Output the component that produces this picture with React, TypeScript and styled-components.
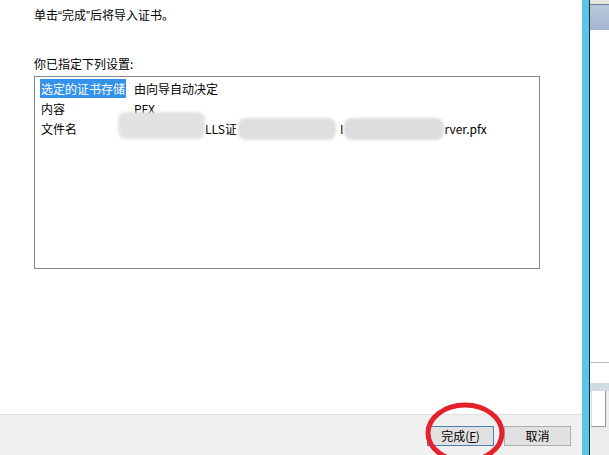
import React from "react";
import styled, { createGlobalStyle } from "styled-components";

const Global = createGlobalStyle`
  html, body { margin: 0; padding: 0; background: #ffffff; overflow: hidden; }
  body { font-family: "Noto Sans CJK SC", "Noto Sans", sans-serif; font-size: 12px; color: #000; }
  * { box-sizing: border-box; }
`;

const Screen = styled.div`
  position: relative;
  display: flex;
  width: 609px;
  height: 455px;
  overflow: hidden;
`;

const Dialog = styled.div`
  width: 582px;
  display: flex;
  flex-direction: column;
  background: #ffffff;
`;

const Body = styled.div`
  flex: 1;
  display: flex;
  flex-direction: column;
  padding: 7px 0 0 34px;
`;

const Line = styled.div<{ $gap?: number }>`
  font-size: 12px;
  line-height: 16px;
  height: 16px;
  margin-top: ${(p) => p.$gap ?? 0}px;
  white-space: nowrap;
`;

const Quote = styled.span`
  font-family: "Liberation Sans", sans-serif;
  font-size: 12px;
`;

const ListBox = styled.div`
  margin-top: 4px;
  width: 506px;
  height: 193px;
  border: 1px solid #828790;
  padding-top: 1px;
  display: flex;
  flex-direction: column;
`;

const Row = styled.div`
  display: flex;
  align-items: center;
  height: 20px;
  font-size: 12px;
  white-space: nowrap;
`;

const KeyCell = styled.div`
  width: 99px;
  padding-left: 5px;
  display: flex;
`;

const KeyText = styled.span<{ $selected?: boolean }>`
  padding: 1px 1px;
  line-height: 17px;
  background: ${(p) => (p.$selected ? "#3592ea" : "transparent")};
  color: ${(p) => (p.$selected ? "#ffffff" : "#000000")};
`;

const ValueCell = styled.div`
  display: flex;
  align-items: center;
  flex: 1;
`;

const Redact = styled.span<{ $w: number; $h: number; $ml?: number; $mt?: number; $tone?: string }>`
  display: inline-block;
  width: ${(p) => p.$w}px;
  height: ${(p) => p.$h}px;
  margin-left: ${(p) => p.$ml ?? 0}px;
  margin-top: ${(p) => p.$mt ?? 0}px;
  background: ${(p) => p.$tone ?? "#dedede"};
  border-radius: 8px;
  filter: blur(1.5px);
  flex-shrink: 0;
`;

const Footer = styled.div`
  height: 41px;
  border-top: 1px solid #dfdfdf;
  background: #f0f0f0;
  display: flex;
  justify-content: flex-end;
  align-items: flex-start;
  gap: 10px;
  padding: 11px 11px 0 0;
`;

const Button = styled.button<{ $default?: boolean }>`
  width: 67px;
  height: 20px;
  padding: 0;
  font-family: "Noto Sans CJK SC", "Noto Sans", sans-serif;
  font-size: 12px;
  color: #000;
  background: #e1e1e1;
  border: 1px solid ${(p) => (p.$default ? "#4d7fb0" : "#adadad")};
  display: flex;
  align-items: center;
  justify-content: center;
  line-height: 16px;
`;

const Under = styled.span`
  text-decoration: underline;
`;

const Frame = styled.div`
  width: 8px;
  background: #5cc4e6;
  border-right: 1px solid #1b2b38;
`;

const Behind = styled.div`
  flex: 1;
  display: flex;
  flex-direction: column;
`;

const BehindHeader = styled.div`
  height: 30px;
  background: linear-gradient(#eae6dc 0 4px, #6f7f94 4px 5px, #b8c8dc 5px, #a4b6d0 100%);
`;

const BehindWhite = styled.div<{ $h: number }>`
  height: ${(p) => p.$h}px;
  background: #ffffff;
`;

const BehindRule = styled.div`
  height: 1px;
  background: #b9b9b9;
`;

const BehindBand = styled.div`
  height: 8px;
  background: #cfdce4;
`;

const BehindPanel = styled.div`
  flex: 1;
  background: #ececec;
  padding-left: 1px;
`;

const BehindBox = styled.div`
  width: 15px;
  height: 36px;
  background: #ffffff;
  border-right: 1px solid #9a9a9a;
  border-bottom: 1px solid #9a9a9a;
  border-left: 1px solid #dcdcdc;
`;

const Annotation = styled.svg`
  position: absolute;
  left: 419px;
  top: 397px;
  pointer-events: none;
`;

export default function App() {
  return (
    <>
      <Global />
      <Screen>
        <Dialog>
          <Body>
            <Line>
              单击<Quote>“</Quote>完成<Quote>”</Quote>后将导入证书。
            </Line>
            <Line $gap={33}>你已指定下列设置:</Line>
            <ListBox>
              <Row>
                <KeyCell>
                  <KeyText $selected>选定的证书存储</KeyText>
                </KeyCell>
                <ValueCell>由向导自动决定</ValueCell>
              </Row>
              <Row>
                <KeyCell>
                  <KeyText>内容</KeyText>
                </KeyCell>
                <ValueCell>PFX</ValueCell>
              </Row>
              <Row>
                <KeyCell>
                  <KeyText>文件名</KeyText>
                </KeyCell>
                <ValueCell>
                  <Redact $w={87} $h={27} $ml={-16} $mt={-6} $tone="#e2e2e2" />
                  <span>LLS证</span>
                  <Redact $w={98} $h={22} $ml={1} $mt={2} />
                  <span style={{ marginLeft: 4 }}>I</span>
                  <Redact $w={100} $h={22} $ml={1} $mt={2} $tone="#dcdcdc" />
                  <span>rver.pfx</span>
                </ValueCell>
              </Row>
            </ListBox>
          </Body>
          <Footer>
            <Button $default>
              完成(<Under>F</Under>)
            </Button>
            <Button>取消</Button>
          </Footer>
        </Dialog>
        <Frame />
        <Behind>
          <BehindHeader />
          <BehindWhite $h={332} />
          <BehindRule />
          <BehindWhite $h={20} />
          <BehindBand />
          <BehindPanel>
            <BehindBox />
          </BehindPanel>
        </Behind>
        <Annotation width="92" height="70" viewBox="0 0 92 70">
          <ellipse cx="46" cy="36" rx="37" ry="28" fill="none" stroke="#e5222b" strokeWidth="5" />
        </Annotation>
      </Screen>
    </>
  );
}
